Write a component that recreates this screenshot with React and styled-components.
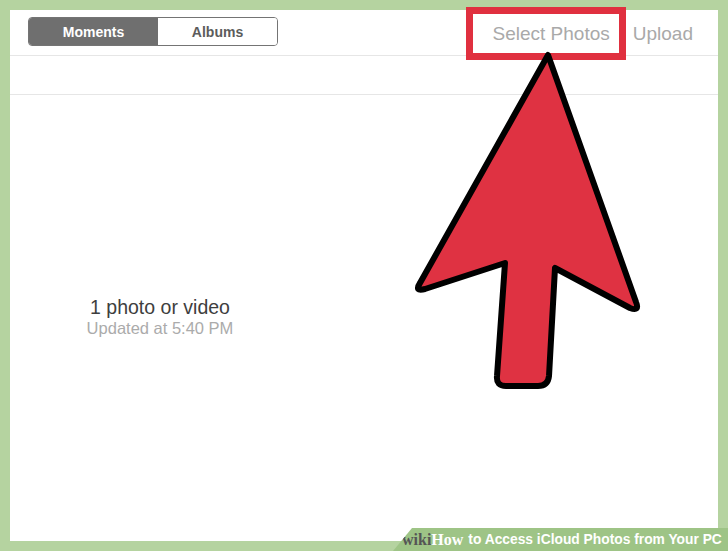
import { createGlobalStyle, styled } from "styled-components";

const GlobalStyle = createGlobalStyle`
  html, body {
    margin: 0;
    padding: 0;
    background: #b5d3a0;
    font-family: "Liberation Sans", Arial, sans-serif;
  }
`;

const Frame = styled.div`
  position: relative;
  width: 728px;
  height: 551px;
  padding: 10px;
  box-sizing: border-box;
  overflow: hidden;
`;

const Panel = styled.div`
  height: 100%;
  background: #ffffff;
  display: flex;
  flex-direction: column;
`;

const Toolbar = styled.div`
  height: 46px;
  flex-shrink: 0;
  border-bottom: 1px solid #e6e6e6;
  display: flex;
  justify-content: space-between;
  align-items: flex-start;
  padding: 7px 25px 0 18px;
  box-sizing: border-box;
`;

const Segmented = styled.div`
  display: flex;
  height: 29px;
  border: 1px solid #747474;
  border-radius: 4px;
  overflow: hidden;
  box-sizing: border-box;
`;

const Segment = styled.button`
  width: ${(p) => p.$w}px;
  border: none;
  margin: 0;
  padding: 0;
  font-family: "Liberation Sans", Arial, sans-serif;
  font-size: 14px;
  font-weight: bold;
  background: ${(p) => (p.$active ? "#6f6f6f" : "#ffffff")};
  color: ${(p) => (p.$active ? "#ffffff" : "#5c5c5c")};
  cursor: pointer;
`;

const Actions = styled.div`
  display: flex;
  gap: 23px;
  padding-top: 6px;
`;

const Action = styled.span`
  font-size: 19px;
  color: #a9a9a9;
  line-height: 22px;
`;

const SubBar = styled.div`
  height: 39px;
  flex-shrink: 0;
  border-bottom: 1px solid #e6e6e6;
  box-sizing: border-box;
`;

const Content = styled.div`
  flex: 1;
  display: flex;
`;

const Summary = styled.div`
  width: 300px;
  display: flex;
  flex-direction: column;
  align-items: center;
  justify-content: center;
  padding-bottom: 2px;
`;

const Count = styled.div`
  font-size: 19.5px;
  color: #3e3e3e;
  line-height: 22px;
`;

const Updated = styled.div`
  font-size: 16.5px;
  color: #ababab;
  line-height: 21px;
`;

const Highlight = styled.div`
  position: absolute;
  left: 466px;
  top: 7px;
  width: 160px;
  height: 53px;
  border: 7px solid #e0303f;
  box-sizing: border-box;
  pointer-events: none;
`;

const ArrowLayer = styled.svg`
  position: absolute;
  left: 0;
  top: 0;
  pointer-events: none;
`;

const Banner = styled.div`
  position: absolute;
  left: 393px;
  right: 0;
  bottom: 0;
  height: 23px;
  background: #9ec486;
  clip-path: polygon(19px 0, 100% 0, 100% 100%, 0 100%);
  display: flex;
  align-items: center;
  padding-left: 9px;
  white-space: nowrap;
`;

const Wiki = styled.span`
  font-family: "Liberation Serif", "Times New Roman", serif;
  font-weight: bold;
  font-size: 16px;
  color: ${(p) => p.$color};
`;

const BannerTitle = styled.span`
  font-weight: bold;
  font-size: 13.8px;
  color: #ffffff;
  margin-left: 5px;
`;

function Arrow() {
  return (
    <ArrowLayer width="728" height="551" viewBox="0 0 728 551">
      <path
        d="M548,55 L636,302 Q640,312 630,308 L555,268 L549,376 Q548,386 538,386 L506,386 Q496,386 497,376 L505,263 L425,289 Q414,292 420,283 Z"
        fill="#df3242"
        stroke="#000000"
        strokeWidth="6"
        strokeLinejoin="round"
      />
    </ArrowLayer>
  );
}

export default function App() {
  return (
    <Frame>
      <GlobalStyle />
      <Panel>
        <Toolbar>
          <Segmented>
            <Segment $active $w={129}>Moments</Segment>
            <Segment $w={119}>Albums</Segment>
          </Segmented>
          <Actions>
            <Action>Select Photos</Action>
            <Action>Upload</Action>
          </Actions>
        </Toolbar>
        <SubBar />
        <Content>
          <Summary>
            <Count>1 photo or video</Count>
            <Updated>Updated at 5:40 PM</Updated>
          </Summary>
        </Content>
      </Panel>
      <Highlight />
      <Arrow />
      <Banner>
        <Wiki $color="#555555">wiki</Wiki>
        <Wiki $color="#ffffff">How</Wiki>
        <BannerTitle>to Access iCloud Photos from Your PC</BannerTitle>
      </Banner>
    </Frame>
  );
}
